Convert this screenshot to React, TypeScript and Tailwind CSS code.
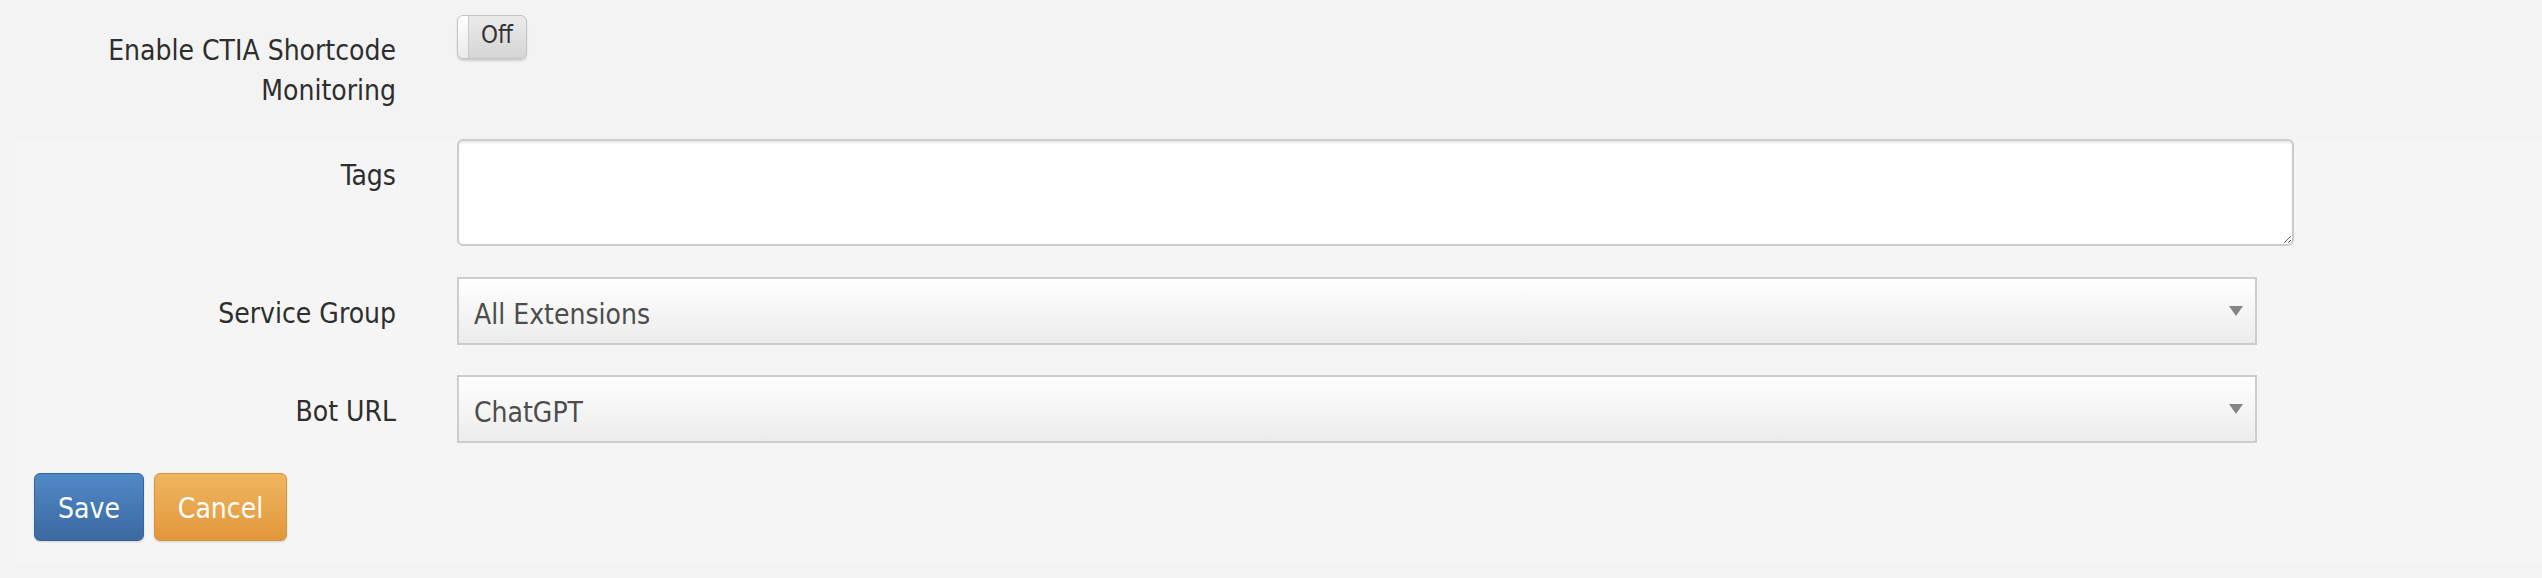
import React from "react";

function Caret() {
  return (
    <svg width="14" height="10" viewBox="0 0 14 10" className="shrink-0">
      <path d="M0 0 H14 L7 10 Z" fill="#858585" />
    </svg>
  );
}

function SelectBox({ value }: { value: string }) {
  return (
    <div className="flex h-[68px] w-[1800px] items-center justify-between border-2 border-[#cdcdcd] bg-gradient-to-b from-white to-[#ececec] pl-[15px] pr-[12px]">
      <span className="pt-[8px] leading-[40px] text-[#4d4d4d]">{value}</span>
      <Caret />
    </div>
  );
}

function Label({ children, className = "" }: { children: React.ReactNode; className?: string }) {
  return (
    <div className={`w-[396px] shrink-0 text-right leading-[40px] text-[#2e2e2e] ${className}`}>
      {children}
    </div>
  );
}

export default function App() {
  return (
    <div
      className="min-h-[578px] w-full bg-[#f3f3f3] text-[28px]"
      style={{ fontFamily: '"DejaVu Sans Condensed", "DejaVu Sans", sans-serif', fontStretch: "condensed" }}
    >
      <div className="flex gap-[61px] pt-[15px]">
        <Label className="pt-[16px]">
          Enable CTIA Shortcode
          <br />
          Monitoring
        </Label>
        <div className="flex h-[44px] w-[70px] overflow-hidden rounded-[6px] border border-[#c6c6c6] bg-gradient-to-b from-[#ebebeb] to-[#d5d5d5] shadow-[0_2px_2px_rgba(0,0,0,0.15)]">
          <div className="w-[11px] rounded-l-[5px] border-r border-[#c9c9c9] bg-gradient-to-b from-white to-[#eaeaea]" />
          <span className="pl-[12px] pt-[4px] text-[24px] leading-[30px] text-[#333]">Off</span>
        </div>
      </div>

      <div className="ml-[16px] mt-[28px] bg-[#f5f5f5] pb-[23px]">
        <div className="-ml-[16px] flex gap-[61px]">
          <Label className="pt-[17px]">Tags</Label>
          <textarea className="h-[107px] w-[1837px] rounded-[6px] border-2 border-[#cccccc] bg-white shadow-[inset_0_2px_2px_rgba(0,0,0,0.08)] outline-none" />
        </div>

        <div className="-ml-[16px] mt-[31px] flex gap-[61px]">
          <Label className="pt-[17px]">Service Group</Label>
          <SelectBox value="All Extensions" />
        </div>

        <div className="-ml-[16px] mt-[30px] flex gap-[61px]">
          <Label className="pt-[17px]">Bot URL</Label>
          <SelectBox value="ChatGPT" />
        </div>

        <div className="-ml-[16px] mt-[30px] flex gap-[10px] pl-[34px]">
          <button className="h-[68px] w-[110px] rounded-[6px] border border-[#36659c] bg-gradient-to-b from-[#5089c6] to-[#3b69a2] pt-[3px] text-white shadow-[0_1px_2px_rgba(0,0,0,0.15)]">
            Save
          </button>
          <button className="h-[68px] w-[133px] rounded-[6px] border border-[#d8953d] bg-gradient-to-b from-[#efb65f] to-[#e2973a] pt-[3px] text-white shadow-[0_1px_2px_rgba(0,0,0,0.15)]">
            Cancel
          </button>
        </div>
      </div>
    </div>
  );
}
